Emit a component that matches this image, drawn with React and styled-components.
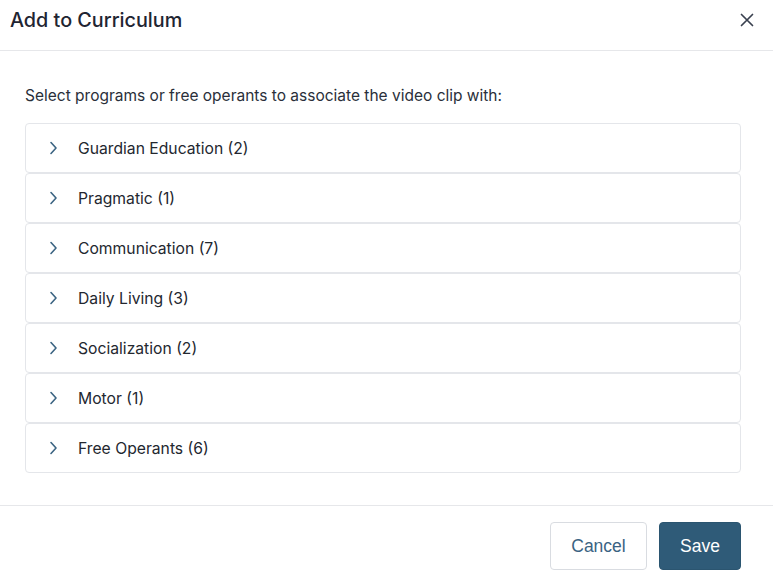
import React from "react";
import styled, { createGlobalStyle } from "styled-components";

const Global = createGlobalStyle`
  html, body { margin: 0; padding: 0; background: #fff; }
  body { font-family: "Inter", "Noto Sans", sans-serif; color: #1f2430; }
  * { box-sizing: border-box; }
`;

const Modal = styled.div`
  width: 773px;
  height: 585px;
  display: flex;
  flex-direction: column;
  background: #fff;
`;

const Header = styled.div`
  height: 51px;
  display: flex;
  align-items: flex-start;
  justify-content: space-between;
  padding: 8px 19px 0 10px;
  border-bottom: 1px solid #e6e7ea;
`;

const Title = styled.h2`
  margin: 0;
  font-size: 19.8px;
  line-height: 24px;
  font-weight: 500;
  color: #1f2532;
`;

const CloseButton = styled.button`
  border: none;
  background: none;
  padding: 0;
  margin-top: 5px;
  width: 14px;
  height: 14px;
  display: flex;
  align-items: center;
  justify-content: center;
  color: #3a4150;
  cursor: pointer;
`;

const Body = styled.div`
  flex: 1;
  padding: 33px 32px 0 25px;
  border-bottom: 1px solid #e6e7ea;
`;

const Intro = styled.p`
  margin: 0 0 15px 0;
  font-size: 15.5px;
  color: #2a2f3a;
  line-height: 24px;
`;

const List = styled.div`
  display: flex;
  flex-direction: column;
`;

const Item = styled.div`
  height: 50px;
  display: flex;
  align-items: center;
  padding-left: 23px;
  border: 1px solid #e4e6ea;
  border-radius: 4px;
  background: #fff;
`;

const Chevron = styled.span`
  width: 12px;
  height: 16px;
  display: flex;
  align-items: center;
  color: #3b6482;
  margin-right: 17px;
`;

const Label = styled.span`
  font-size: 15.7px;
  color: #23272f;
`;

const Footer = styled.div`
  height: 79px;
  display: flex;
  justify-content: flex-end;
  align-items: flex-start;
  gap: 12px;
  padding: 16px 32px 0 0;
`;

const Button = styled.button`
  height: 48px;
  width: ${(p) => (p.$primary ? "82px" : "97px")};
  padding: 0;
  border-radius: 4px;
  font-family: "Liberation Sans", Arial, sans-serif;
  font-size: 17.5px;
  cursor: pointer;
  border: 1px solid ${(p) => (p.$primary ? "#2b5570" : "#d9dce1")};
  background: ${(p) => (p.$primary ? "#2f5b78" : "#fff")};
  color: ${(p) => (p.$primary ? "#fff" : "#3a6383")};
`;

const items = [
  "Guardian Education (2)",
  "Pragmatic (1)",
  "Communication (7)",
  "Daily Living (3)",
  "Socialization (2)",
  "Motor (1)",
  "Free Operants (6)",
];

export default function App() {
  return (
    <>
      <Global />
      <Modal>
        <Header>
          <Title>Add to Curriculum</Title>
          <CloseButton aria-label="Close">
            <svg width="14" height="14" viewBox="0 0 14 14" fill="none" stroke="currentColor" strokeWidth="1.7" strokeLinecap="round">
              <path d="M1.5 1.5 L12.5 12.5 M12.5 1.5 L1.5 12.5" />
            </svg>
          </CloseButton>
        </Header>
        <Body>
          <Intro>Select programs or free operants to associate the video clip with:</Intro>
          <List>
            {items.map((t) => (
              <Item key={t}>
                <Chevron>
                  <svg width="9" height="14" viewBox="0 0 9 14" fill="none" stroke="currentColor" strokeWidth="1.6" strokeLinecap="round" strokeLinejoin="round">
                    <path d="M2 1.5 L7 7 L2 12.5" />
                  </svg>
                </Chevron>
                <Label>{t}</Label>
              </Item>
            ))}
          </List>
        </Body>
        <Footer>
          <Button>Cancel</Button>
          <Button $primary>Save</Button>
        </Footer>
      </Modal>
    </>
  );
}
